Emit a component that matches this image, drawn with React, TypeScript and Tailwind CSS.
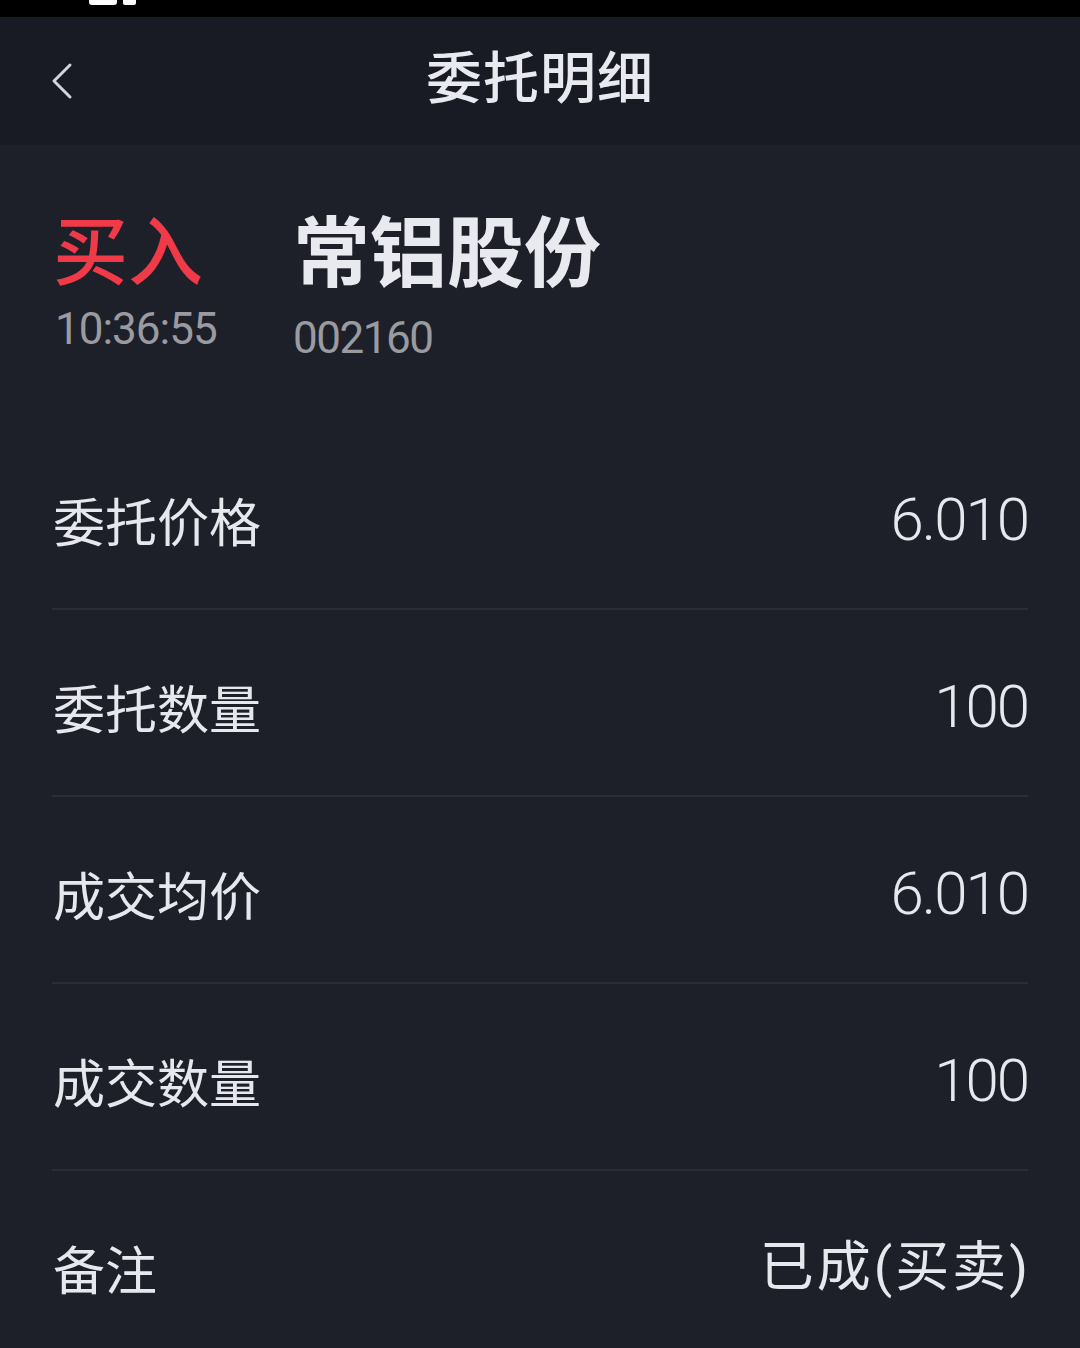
const rows = [
  { label: '委托价格', value: '6.010' },
  { label: '委托数量', value: '100' },
  { label: '成交均价', value: '6.010' },
  { label: '成交数量', value: '100' },
  { label: '备注', value: '已成(买卖)' },
];

const cjk = "font-['Noto_Sans_CJK_SC',sans-serif]";
const num = "font-['Roboto','Noto_Sans_CJK_SC',sans-serif]";

const App = () => {
  return (
    <div className="w-[1080px] h-[1348px] overflow-hidden bg-[#1e2029] text-[#e6e8ee]">
      {/* status bar */}
      <div className="h-[17px] bg-black flex items-start pl-[89px] gap-[6px]">
        <div className="w-[28px] h-[5px] bg-white rounded-b-[3px]" />
        <div className="w-[13px] h-[5px] bg-white rounded-b-[2px]" />
      </div>

      {/* header */}
      <div className="h-[128px] bg-[#181a24] relative flex items-center justify-center">
        <button className="absolute left-[48px] top-[44px] w-[28px] h-[40px] flex items-center justify-center" aria-label="back">
          <svg width="24" height="38" viewBox="0 0 24 38" fill="none">
            <polyline
              points="20,3 4,19 20,35"
              stroke="#d3d5db"
              strokeWidth="3"
              strokeLinecap="round"
              strokeLinejoin="round"
            />
          </svg>
        </button>
        <h1 className={`${cjk} text-[56px] leading-none font-medium tracking-[1px] text-[#e8eaf0] -mt-[15px]`}>委托明细</h1>
      </div>

      {/* order summary */}
      <div className="flex items-start pl-[53px] pt-[64px]">
        <div className="w-[244px] flex flex-col">
          <span className={`${cjk} text-[75px] leading-none font-medium text-[#f03a48]`}>买入</span>
          <span className={`${num} text-[44px] leading-none text-[#9a9ba0] tracking-[-1px] mt-[23px] ml-[2px]`}>10:36:55</span>
        </div>
        <div className="flex flex-col">
          <span className={`${cjk} text-[77px] leading-none font-bold text-[#e8eaf0] -ml-[4px]`}>常铝股份</span>
          <span className={`${num} text-[44px] leading-none text-[#9a9ba0] tracking-[-1.5px] mt-[30px] -ml-[4px]`}>002160</span>
        </div>
      </div>

      {/* detail rows */}
      <div className="mt-[63px] px-[52px]">
        {rows.map((r, i) => (
          <div
            key={r.label}
            className={`flex items-center justify-between pt-[71px] pb-[62px] ${i < rows.length - 1 ? 'border-b-2 border-[#2a2c36]' : ''}`}
          >
            <span className={`${cjk} text-[52px] leading-[52px] pl-[1px]`}>{r.label}</span>
            {r.value.length > 5 ? (
              <span className={`${num} text-[54px] leading-[52px] tracking-[3px] -mr-[3px]`}>{r.value}</span>
            ) : (
              <span className={`${num} text-[60px] leading-[52px] font-light tracking-[-2px]`}>{r.value}</span>
            )}
          </div>
        ))}
      </div>
    </div>
  );
};

export default App;
